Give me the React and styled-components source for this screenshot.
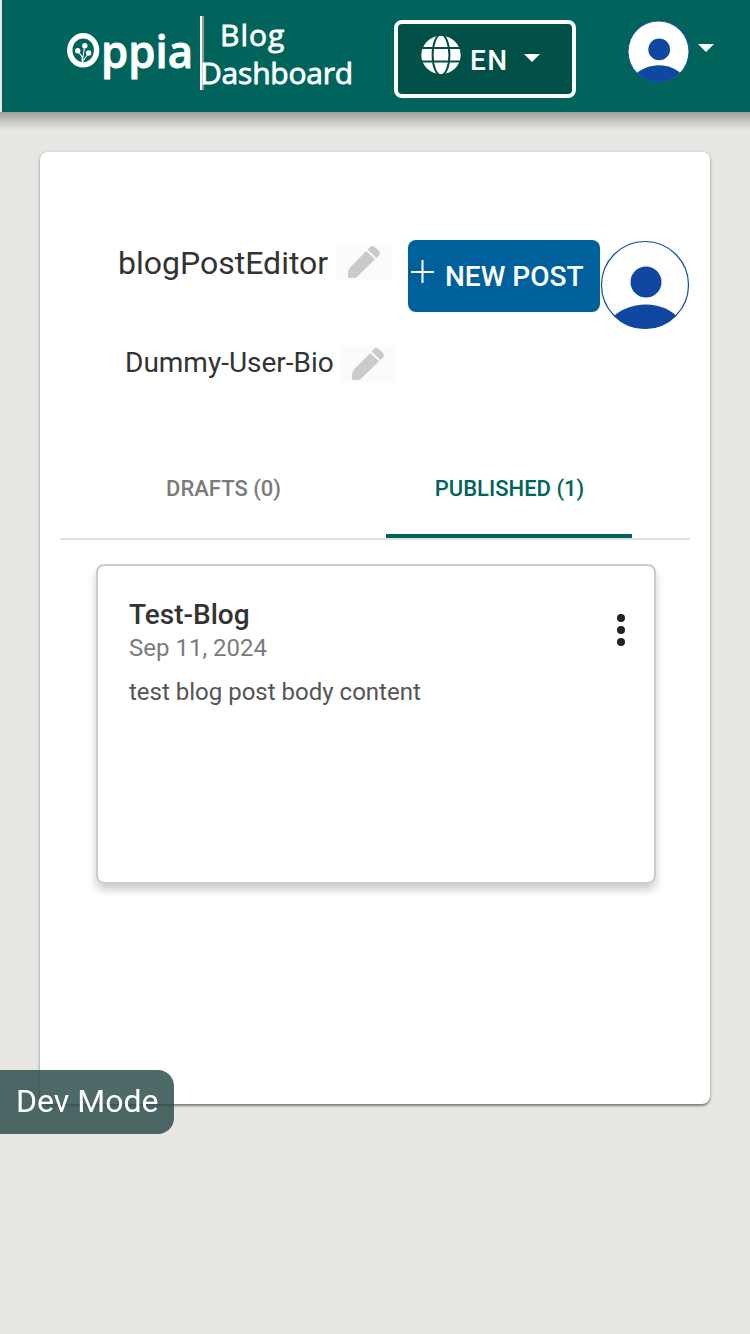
import React from "react";
import styled, { createGlobalStyle } from "styled-components";

const Global = createGlobalStyle`
  *, *::before, *::after { box-sizing: border-box; }
  body { margin: 0; background: #e8e7e3; font-family: Roboto, "Liberation Sans", sans-serif; color: #333; }
  button { font-family: inherit; margin: 0; padding: 0; border: 0; background: none; }
  h1, h2, p { margin: 0; font-weight: 400; }
  svg { display: block; flex: none; }
`;

const Page = styled.div`
  min-height: 1334px;
  overflow: hidden;
  background: #e8e7e3;
`;

const Header = styled.header`
  display: flex;
  align-items: flex-start;
  height: 112px;
  margin-left: 2px;
  background: #00645c;
`;

const HeaderShade = styled.div`
  height: 20px;
  margin-bottom: -20px;
  background: linear-gradient(
    rgba(0, 0, 0, 0.31),
    rgba(0, 0, 0, 0.23) 25%,
    rgba(0, 0, 0, 0.1) 55%,
    rgba(0, 0, 0, 0.02) 85%,
    transparent
  );
`;

const Logo = styled.svg`
  margin: 12px 0 0 58px;
`;

const Title = styled.h1`
  height: 74px;
  margin-top: 16px;
  border-left: 2px solid #f4f4f2;
  box-shadow: inset 2px 0 0 #999;
  color: #fff;
  font: 400 30px/37.5px "Open Sans", sans-serif;
  -webkit-text-stroke: 0.8px #fff;
  white-space: nowrap;
`;

const TitleLine = styled.span`
  display: block;
  margin-left: ${(p) => p.$indent || 0}px;
  letter-spacing: ${(p) => p.$spacing || 0}px;
`;

const LanguageButton = styled.button`
  display: flex;
  align-items: flex-start;
  width: 182px;
  height: 78px;
  margin: 20px 0 0 auto;
  padding: 11px 0 0 23px;
  border: 4px solid #fff;
  border-radius: 8px;
  background: #005048;
  color: #fff;
  font-size: 28px;
  font-weight: 500;
  line-height: 32px;
  letter-spacing: 1.4px;
`;

const LanguageCode = styled.span`
  width: 54px;
  margin: 10px 0 0 9px;
  text-align: left;
`;

const Caret = styled.span`
  width: 0;
  height: 0;
  margin-top: ${(p) => p.$top}px;
  border: 8px solid transparent;
  border-top-color: #fff;
  border-bottom: 0;
`;

const ProfileMenu = styled.button`
  display: flex;
  align-items: flex-start;
  gap: 8px;
  margin: 20px 36px 0 51px;
`;

const Panel = styled.main`
  height: 952px;
  margin: 40px;
  padding: 88px 20px 0;
  border-radius: 8px;
  background: #fff;
  box-shadow: 0 2px 2px rgba(0, 0, 0, 0.35), 0 1px 4px rgba(0, 0, 0, 0.2);
`;

const Profile = styled.section`
  display: flex;
  align-items: flex-start;
  height: 198px;
  padding-left: 58px;
`;

const Details = styled.div`
  width: 290px;
`;

const Field = styled.div`
  display: flex;
  align-items: flex-start;
  height: 102px;
  padding: 4px 0 0 ${(p) => p.$indent || 0}px;
`;

const FieldText = styled.p`
  width: ${(p) => p.$width}px;
  font-size: ${(p) => p.$size}px;
  line-height: 38px;
  margin-top: ${(p) => p.$top || 0}px;
  white-space: nowrap;
`;

const EditButton = styled.button`
  display: flex;
  align-items: flex-start;
  width: 56px;
  height: 36px;
  padding: 2px 0 0 12px;
  background: #fbfbfb;
`;

const NewPost = styled.button`
  display: flex;
  align-items: flex-start;
  width: 192px;
  height: 72px;
  padding: 21px 0 0 3px;
  border-radius: 8px;
  background: #00609c;
  color: #fff;
  font-size: 28px;
  font-weight: 500;
  line-height: 32px;
  white-space: nowrap;
`;

const PlusIcon = styled.svg`
  margin-top: -1px;
`;

const NewPostLabel = styled.span`
  margin-left: 11px;
`;

const Tabs = styled.nav`
  display: flex;
  height: 102px;
  border-bottom: 2px solid #e0e0e0;
`;

const Tab = styled.button`
  width: ${(p) => p.$width}px;
  height: 100px;
  padding: 4px 0 0 1px;
  border-bottom: 4px solid ${(p) => (p.$active ? "#00645c" : "transparent")};
  color: ${(p) => (p.$active ? "#00645c" : "#7b7b7b")};
  font-size: 22px;
  font-weight: 500;
`;

const PostCard = styled.article`
  display: flex;
  justify-content: space-between;
  height: 320px;
  margin: 24px 34px 0 36px;
  padding: 31px 29px 0 31px;
  border: 2px solid #ccc;
  border-radius: 8px;
  box-shadow: 0 6px 8px rgba(0, 0, 0, 0.2);
`;

const PostTitle = styled.h2`
  font-size: 28px;
  font-weight: 500;
  line-height: 36px;
`;

const PostDate = styled.p`
  margin-top: -1px;
  color: #7b7b7b;
  font-size: 24px;
  line-height: 32px;
`;

const PostSummary = styled.p`
  margin-top: 12px;
  color: #555;
  font-size: 24px;
  line-height: 32px;
`;

const MenuButton = styled.button`
  align-self: flex-start;
  margin-top: 17px;
`;

const DevMode = styled.aside`
  position: fixed;
  top: 1070px;
  left: 0;
  width: 174px;
  height: 64px;
  padding-left: 16px;
  border-radius: 0 16px 16px 0;
  background: rgba(41, 76, 74, 0.83);
  color: #fff;
  font-size: 32px;
  line-height: 62px;
  white-space: nowrap;
`;

const Avatar = ({ size, id }) => (
  <svg width={size} height={size} viewBox="0 0 90 90">
    <clipPath id={id}>
      <circle cx="45" cy="45" r="43.5" />
    </clipPath>
    <circle cx="45" cy="45" r="43.5" fill="#fff" />
    <g clipPath={`url(#${id})`} fill="#0f47a1">
      <circle cx="46" cy="42" r="15.5" />
      <path d="M10 80C27 60 64 59 80 80V92H10Z" />
    </g>
    <circle cx="45" cy="45" r="43.5" fill="none" stroke="#0f47a1" strokeWidth="1.2" />
  </svg>
);

const Pencil = () => (
  <svg width="32" height="32" viewBox="0 0 32 32" fill="#cacaca">
    <path d="M18.2 4.9 27 13.2 9.4 30.4Q8.2 31.5 6.6 31.7L1.2 32Q0 32 0 30.8L.3 25.2Q.4 23.4 1.6 22.1Z" />
    <path d="M19.6 3.5 22.2 1Q24.6-.9 26.8 1L31 5.1Q32.9 7.3 31 9.4L28.4 11.9Z" />
  </svg>
);

const Globe = () => (
  <svg width="40" height="40" viewBox="0 0 40 40">
    <ellipse cx="20" cy="20" rx="19.7" ry="19.2" fill="#fff" />
    <g fill="none" stroke="#005048" strokeWidth="2">
      <ellipse cx="20" cy="20" rx="8.4" ry="20.5" />
      <path d="M0 13H40M0 26.5H40" />
    </g>
  </svg>
);

const OppiaLogo = () => (
  <Logo width="140" height="74" viewBox="0 -8 140 74" fill="#fff">
    <ellipse cx="23.2" cy="30.3" rx="13.4" ry="14.6" fill="none" stroke="#fff" strokeWidth="5.4" />
    <circle cx="17.7" cy="30.7" r="2.7" />
    <circle cx="24.8" cy="25.7" r="2.7" />
    <circle cx="28.6" cy="33" r="2.7" />
    <path d="M22.2 45V37L17.7 30.7M22.3 41L24.8 25.7M22.3 42L28.6 33" fill="none" stroke="#fff" strokeWidth="1.1" />
    <text x="41" y="48" fontFamily="Open Sans, sans-serif" fontSize="46" fontWeight="600" stroke="#fff" strokeWidth="0.9" textLength="92" lengthAdjust="spacingAndGlyphs">ppia</text>
  </Logo>
);

export default function App() {
  return (
    <Page>
      <Global />
      <Header>
        <OppiaLogo />
        <Title>
          <TitleLine $indent={18} $spacing={1}>Blog</TitleLine>
          <TitleLine $indent={-2} $spacing={-0.2}>Dashboard</TitleLine>
        </Title>
        <LanguageButton>
          <Globe />
          <LanguageCode>EN</LanguageCode>
          <Caret $top={19} />
        </LanguageButton>
        <ProfileMenu aria-label="Profile menu">
          <Avatar size={63} id="nav-avatar" />
          <Caret $top={24} />
        </ProfileMenu>
      </Header>
      <HeaderShade />
      <Panel>
        <Profile>
          <Details>
            <Field>
              <FieldText $width={218} $size={32}>blogPostEditor</FieldText>
              <EditButton aria-label="Edit name"><Pencil /></EditButton>
            </Field>
            <Field $indent={7}>
              <FieldText $width={215} $size={28} $top={-2}>Dummy-User-Bio</FieldText>
              <EditButton aria-label="Edit bio"><Pencil /></EditButton>
            </Field>
          </Details>
          <NewPost>
            <PlusIcon width="23" height="23" viewBox="0 0 23 23" fill="none" stroke="#fff" strokeWidth="2">
              <path d="M11.5 0V23M0 12H23" />
            </PlusIcon>
            <NewPostLabel>NEW POST</NewPostLabel>
          </NewPost>
          <Avatar size={90} id="profile-avatar" />
        </Profile>
        <Tabs>
          <Tab $width={326}>DRAFTS (0)</Tab>
          <Tab $width={246} $active>PUBLISHED (1)</Tab>
        </Tabs>
        <PostCard>
          <div>
            <PostTitle>Test-Blog</PostTitle>
            <PostDate>Sep 11, 2024</PostDate>
            <PostSummary>test blog post body content</PostSummary>
          </div>
          <MenuButton aria-label="Post options">
            <svg width="8" height="32" viewBox="0 0 8 32" fill="#222">
              <circle cx="4" cy="4" r="4" />
              <circle cx="4" cy="16" r="4" />
              <circle cx="4" cy="28" r="4" />
            </svg>
          </MenuButton>
        </PostCard>
      </Panel>
      <DevMode>Dev Mode</DevMode>
    </Page>
  );
}
